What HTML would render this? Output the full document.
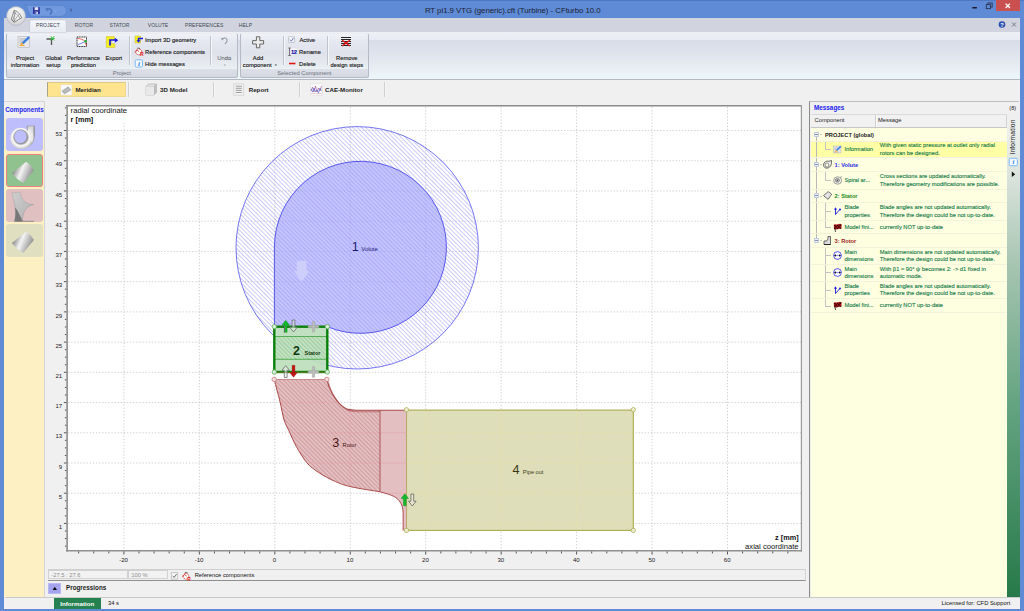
<!DOCTYPE html>
<html><head><meta charset="utf-8"><title>CFturbo</title>
<style>
*{box-sizing:border-box;margin:0;padding:0}
html,body{width:1024px;height:611px;overflow:hidden;background:#5f8bd6;font-family:"Liberation Sans","DejaVu Sans",sans-serif;font-size:6.6px;color:#222}
.a{position:absolute}
.t{position:absolute;white-space:nowrap;line-height:1}
.c{text-align:center;transform:translateX(-50%)}
#win{position:absolute;left:0;top:0;width:1024px;height:611px;background:#5f8bd6;overflow:hidden}
#client{position:absolute;left:4.2px;top:18px;width:1015.4px;height:590.5px;background:#f0f0f0}
#tabrow{position:absolute;left:4.2px;top:18px;width:1015.4px;height:14px;background:#d1d4de}
#ribbon{position:absolute;left:4.2px;top:31.8px;width:1015.4px;height:47.8px;background:linear-gradient(#eef0f6 0,#e8ebf3 8px,#d8dce8 8.5px,#e2e6ee 55%,#edf7f8 100%);border-bottom:1px solid #b5b8c2}
.grp{position:absolute;top:32.5px;height:45px;border:1px solid #b6bac6;border-top-color:rgba(255,255,255,0.5);border-radius:2.5px;background:linear-gradient(#f0f2f7 0,#e4e7ef 20%,#dfe2ea 45%,#e9eef2 78%,#ecf3f4 81%,#dcdfe7 82.5%,#d5d8e1 100%)}
.gcap{position:absolute;left:0;right:0;bottom:0;height:8px;text-align:center;color:#6c707c;font-size:5.8px;line-height:8px}
.vsep{position:absolute;width:1px;background:#c0c3cd;box-shadow:1px 0 0 #f6f7fa}
.rt{position:absolute;white-space:nowrap;line-height:7px;font-size:5.8px;color:#111;text-align:center;-webkit-text-stroke:0.12px #111}
.rtc{transform:translateX(-50%)}
.tab{position:absolute;top:22.7px;font-size:5.05px;color:#444a55;white-space:nowrap;line-height:1;letter-spacing:0.05px}
.vt{top:86.6px;font-size:6.2px;font-weight:700;color:#222}
.cb{left:5.6px;width:37.8px;height:33.2px;border-radius:3px}
.mt{font-size:5.76px;line-height:7.4px;color:#23804e;-webkit-text-stroke:0.14px #23804e;letter-spacing:-0.01px}
</style></head><body>
<div id="win"><div class="a" style="left:0;top:0;width:1024px;height:1px;background:#4f78c0"></div>
<div id="client"></div>
<!-- TITLE -->
<div class="t" style="left:424.9px;top:7.4px;font-size:7.85px;letter-spacing:-0.04px;color:#1a2233">RT pi1.9 VTG (generic).cft (Turbine) - CFturbo 10.0</div>
<div id="tabrow"></div>
<div id="ribbon"></div>
<!--TABS-->
<!-- title bar controls -->
<div class="a" style="left:996.3px;top:0;width:23.7px;height:11.3px;background:#c9504e"></div>
<svg class="a" style="left:960px;top:0" width="64" height="14" viewBox="0 0 64 14">
<rect x="12.3" y="7" width="4.6" height="1.5" fill="#1b1b2b"/>
<rect x="28" y="3" width="4.2" height="4" fill="none" stroke="#2a3350" stroke-width="0.9"/>
<rect x="26.3" y="4.6" width="4.2" height="4" fill="#5f8bd6" stroke="#2a3350" stroke-width="0.9"/>
<path d="M45.6 3.6l4.4 4.4M50 3.6l-4.4 4.4" stroke="#fff" stroke-width="1.3"/>
</svg>
<!-- quick access pill -->
<svg class="a" style="left:4px;top:2px" width="80" height="26" viewBox="0 0 80 26">
<path d="M20.5 3.2h36.5a5.6 5.6 0 0 1 0 11.2H29.5c-3 0-4.5-2.5-5.5-6c-0.8-2.8-1.5-4.6-3.5-5.2z" fill="#7099df" stroke="#547fc8" stroke-width="0.7"/>
<defs><radialGradient id="orb" cx="0.5" cy="0.35" r="0.7"><stop offset="0" stop-color="#ffffff"/><stop offset="0.6" stop-color="#e6e6e6"/><stop offset="1" stop-color="#c4c4c6"/></radialGradient></defs>
<circle cx="12" cy="14" r="9.5" fill="url(#orb)" stroke="#aeb4c2" stroke-width="0.6"/>
<path d="M7.3 17.3L10 8.3C13.5 9 16.5 12 17.6 16L10 20.3Z" fill="none" stroke="#4a4a4a" stroke-width="0.6"/>
<path d="M9.3 10.5C12.3 11.2 14.8 13.5 16 16.8M8.3 19L12.3 9.4M9.3 19.8L15.3 11.8M10 20.3L10.5 9" stroke="#5a5a5a" stroke-width="0.45" fill="none"/>
<!-- save -->
<rect x="29" y="5.2" width="6.8" height="6.8" fill="#2b2f9a"/>
<rect x="30.6" y="5.2" width="3.6" height="2.9" fill="#dfe3f5"/>
<rect x="30.8" y="9.6" width="3.2" height="2.4" fill="#c8cce8"/>
<rect x="31.2" y="10" width="1" height="1.6" fill="#2b2f9a"/>
<!-- undo grey -->
<path d="M43.2 8.3c1-2 3.8-2 4.3 0.3c0.4 1.7-0.5 2.9-1.8 3.7" fill="none" stroke="#4c77bf" stroke-width="1.7"/>
<path d="M41.5 6l3.5 0.6l-2.1 3z" fill="#4c77bf"/>
<path d="M50.3 8.4h2.4l-1.2 1.5z" fill="#8fb0e6"/>
<path d="M66 7.2h2.2" stroke="#3a4a78" stroke-width="0.5"/><path d="M66 8.3h2.2l-1.1 1.4z" fill="#3a4a78"/>
</svg>
<!-- help & close -->
<svg class="a" style="left:996px;top:19px" width="24" height="11" viewBox="0 0 24 11">
<circle cx="6" cy="5.5" r="3.3" fill="#2b4fb0"/>
<text x="6" y="7.6" font-size="5.8" font-weight="700" fill="#fff" text-anchor="middle" font-family="Liberation Sans, sans-serif">?</text>
<path d="M16 3.5l4 4M20 3.5l-4 4" stroke="#6a6f7c" stroke-width="0.9"/>
</svg>
<!-- tabs -->
<div class="a" style="left:30px;top:20.2px;width:36px;height:12px;background:linear-gradient(#f3f5f9,#e8ebf2);border:1px solid #e9ecf2;border-bottom:none;border-radius:2px 2px 0 0;box-shadow:0 0 0 0.5px #c3c7d2"></div>
<div class="tab" style="left:36px">PROJECT</div>
<div class="tab" style="left:74.8px">ROTOR</div>
<div class="tab" style="left:109.5px">STATOR</div>
<div class="tab" style="left:147.8px">VOLUTE</div>
<div class="tab" style="left:185px">PREFERENCES</div>
<div class="tab" style="left:238.7px">HELP</div>
<!-- group 1 -->
<div class="grp" style="left:5.6px;width:232.4px"><div class="gcap">Project</div></div>
<div class="vsep" style="left:128.5px;top:36px;height:29px"></div>
<div class="vsep" style="left:210px;top:36px;height:29px"></div>
<!-- icons big -->
<svg class="a" style="left:16.5px;top:35px" width="14" height="14" viewBox="0 0 14 14">
<rect x="1" y="1.5" width="11.5" height="11" fill="#e9e9ec" stroke="#b9bbc2" stroke-width="0.7"/>
<path d="M2.5 4h6M2.5 6h4.5M2.5 8h3" stroke="#9a9ca6" stroke-width="0.7"/>
<path d="M11.3 1.2l1.7 1.7l-6.5 6.3l-1.7-1.7z" fill="#3b7fe0"/>
<path d="M4.8 7.5l1.7 1.7l-3.6 1.3z" fill="#f0a020"/>
<path d="M2.5 10.5h5" stroke="#f0a020" stroke-width="0.9"/>
</svg>
<svg class="a" style="left:44.5px;top:35px" width="14" height="14" viewBox="0 0 14 14">
<path d="M1.5 4h6.5M6.5 4v6" stroke="#555" stroke-width="1.3" fill="none"/>
<path d="M5.8 1.2l3.4 4.3M9.2 1.2l-3.4 4.3M5.2 3.4h4.6" stroke="#2bbd3b" stroke-width="0.9"/>
</svg>
<svg class="a" style="left:75px;top:34.5px" width="14" height="14" viewBox="0 0 14 14">
<rect x="2" y="2" width="9.5" height="9.5" fill="#fff" stroke="#222" stroke-width="0.9" stroke-dasharray="1.2 0.5"/>
<path d="M2.5 3.5c3 0 5 1 8.5 3" stroke="#e03a3a" stroke-width="0.8" fill="none"/>
<path d="M2.5 9.5c3-0.5 5-1.5 8.5-3.5" stroke="#4a5ae0" stroke-width="0.8" fill="none"/>
<circle cx="10.5" cy="6.2" r="1.3" fill="#22b53a"/>
<path d="M10.6 7.5l0.8 3" stroke="#c02020" stroke-width="0.9"/>
</svg>
<svg class="a" style="left:105px;top:34.5px" width="15" height="14" viewBox="0 0 15 14">
<path d="M1.3 1.5h8v3.5h-3v3.8h3.5v3.7h-8.5z" fill="#f5ee20" stroke="#c8c030" stroke-width="0.5"/>
<path d="M5 10.5v-5.5h5" stroke="#1a1ae0" stroke-width="1.7" fill="none"/>
<path d="M9.8 2.7l3.5 2.5l-3.5 2.5z" fill="#1a1ae0"/>
</svg>
<div class="rt rtc" style="left:25px;top:54.7px">Project<br>information</div>
<div class="rt rtc" style="left:53.3px;top:54.7px">Global<br>setup</div>
<div class="rt rtc" style="left:83.5px;top:54.7px">Performance<br>prediction</div>
<div class="rt rtc" style="left:113.8px;top:54.7px">Export</div>
<!-- small buttons -->
<svg class="a" style="left:133.5px;top:34.5px" width="11" height="34" viewBox="0 0 11 34">
<path d="M1 1h5.5v7h-5.5z" fill="#f5ee20" stroke="#bdb530" stroke-width="0.5"/>
<path d="M9 3.5h-4.5v2.5" stroke="#1a1ae0" stroke-width="1.5" fill="none"/>
<path d="M2.4 5.3h4.2l-2.1 2.4z" fill="#1a1ae0"/>
<circle cx="4.7" cy="16.8" r="3" fill="#fff" stroke="#d02525" stroke-width="0.8" stroke-dasharray="2 0.8"/>
<path d="M1 17.5l2-2.5l2 1.5" fill="none" stroke="#d02525" stroke-width="0.8"/>
<path d="M3.5 13l2.5 0.5" stroke="#333" stroke-width="0.7"/>
<text x="6" y="21.3" font-size="5" font-weight="700" fill="#e02020" font-family="Liberation Sans, sans-serif">R</text>
<rect x="1.2" y="24.8" width="7.3" height="7.3" rx="1.3" fill="#f4f8ff" stroke="#7db8f5" stroke-width="1"/>
<text x="5" y="31" font-size="7" font-weight="700" font-style="italic" fill="#2a7be8" text-anchor="middle" font-family="Liberation Serif, serif">i</text>
</svg>
<div class="rt" style="left:145px;top:37px">Import 3D geometry</div>
<div class="rt" style="left:145px;top:48.8px">Reference components</div>
<div class="rt" style="left:145px;top:60.7px">Hide messages</div>
<!-- undo -->
<svg class="a" style="left:218px;top:36px" width="12" height="10" viewBox="0 0 12 10">
<path d="M4.5 3.5c1.2-2.2 4.3-2 4.6 0.5c0.2 1.8-0.8 3-2.2 4" fill="none" stroke="#9a9eab" stroke-width="1.2"/>
<path d="M2.8 1.8l3 0.5l-1.8 2.5z" fill="#9a9eab"/>
</svg>
<div class="rt rtc" style="left:224.3px;top:54.7px;color:#9b9fab">Undo</div>
<svg class="a" style="left:222.8px;top:63.5px" width="4" height="3" viewBox="0 0 4 3"><path d="M0.5 0.5h2.6l-1.3 1.6z" fill="#a0a4b0"/></svg>
<!-- group 2 -->
<div class="grp" style="left:240px;width:128.5px"><div class="gcap">Selected Component</div></div>
<div class="vsep" style="left:282.5px;top:36px;height:29px"></div>
<div class="vsep" style="left:326.8px;top:36px;height:29px"></div>
<svg class="a" style="left:251px;top:34.5px" width="14" height="14" viewBox="0 0 14 14">
<path d="M5.4 1.8h3.4v3.8h3.8v3.4h-3.8v3.8h-3.4v-3.8h-3.8v-3.4h3.8z" fill="#ececec" stroke="#5a5a5a" stroke-width="0.9"/>
</svg>
<div class="rt rtc" style="left:258px;top:54.7px">Add<br>component&nbsp;</div>
<svg class="a" style="left:273.8px;top:63.5px" width="4" height="3" viewBox="0 0 4 3"><path d="M0.5 0.5h2.6l-1.3 1.6z" fill="#555"/></svg>
<svg class="a" style="left:287px;top:35px" width="12" height="33" viewBox="0 0 12 33">
<rect x="1.7" y="1.8" width="5.8" height="5.8" fill="#f4f5f8" stroke="#b4b7c1" stroke-width="0.7"/>
<path d="M3 4.7l1.3 1.5l2.2-3.2" stroke="#4a62b8" stroke-width="0.8" fill="none"/>
<path d="M1.3 13h2.4M2.5 13v7.5M1.3 20.5h2.4" stroke="#444" stroke-width="0.7" fill="none"/>
<rect x="3.9" y="13.6" width="6.3" height="5.6" fill="#fbfbfd"/><text x="4" y="18.6" font-size="5.8" font-weight="700" fill="#0c0ca8" stroke="#0c0ca8" stroke-width="0.15" font-family="Liberation Sans, sans-serif" letter-spacing="-0.4">12</text>
<rect x="2" y="27.7" width="6.5" height="1.6" fill="#e01515"/>
</svg>
<div class="rt" style="left:299.5px;top:37px">Active</div>
<div class="rt" style="left:299px;top:48.8px">Rename</div>
<div class="rt" style="left:299px;top:60.7px">Delete</div>
<svg class="a" style="left:340px;top:36px" width="13" height="11" viewBox="0 0 13 11">
<path d="M1 1h10M1 3h10M1 5h10M1 7.3h10M1 9.5h10" stroke="#111" stroke-width="0.9" shape-rendering="crispEdges"/>
<path d="M2.2 4.3l7.6 5.8M9.8 4.3l-7.6 5.8" stroke="#e81010" stroke-width="1.3"/>
</svg>
<div class="rt rtc" style="left:346.8px;top:54.7px">Remove<br>design steps</div>
<!--/RIBBON-->
<!--VIEWTABS-->
<!-- view tabs -->
<div class="a" style="left:46.5px;top:82.2px;width:79.2px;height:14.5px;background:#ffe48f;border:1px solid #ecd88e;border-left:1px solid #a9a38c;border-top:1px solid #d9c888"></div>
<div class="vsep" style="left:127.8px;top:82px;height:15px;background:#d0d0d0"></div>
<div class="vsep" style="left:213.2px;top:82px;height:15px;background:#d0d0d0"></div>
<div class="vsep" style="left:298.7px;top:82px;height:15px;background:#d0d0d0"></div>
<div class="vsep" style="left:383.7px;top:82px;height:15px;background:#d0d0d0"></div>
<svg class="a" style="left:59.5px;top:83.5px" width="13" height="12" viewBox="0 0 13 12">
<rect x="0.8" y="0.8" width="11" height="10.4" fill="#fbfbfb" stroke="#cfcfcf" stroke-width="0.5" stroke-dasharray="0.8 0.6"/>
<path d="M2 7l6.3-4.2l2.5 3.2l-6.3 4z" fill="#b9b9b9" stroke="#8d8d8d" stroke-width="0.5"/>
</svg>
<svg class="a" style="left:144.5px;top:83px" width="13" height="13" viewBox="0 0 13 13">
<path d="M1 3.5l2.5-2.5h8v8.5l-2.5 2.5h-8z" fill="#e2e2e2" stroke="#a9a9a9" stroke-width="0.6"/>
<path d="M1 3.5h8v8.5M9 3.5l2.5-2.5" fill="none" stroke="#a9a9a9" stroke-width="0.6"/>
<path d="M1 3.5h8v8.5h-8z" fill="#e9e9e9"/>
<path d="M9 3.5l2.5-2.5v8.5l-2.5 2.5z" fill="#bdbdbd"/>
</svg>
<svg class="a" style="left:232.5px;top:83px" width="12" height="13" viewBox="0 0 12 13">
<rect x="0.8" y="0.8" width="10" height="11.4" fill="#f1f1f1" stroke="#c9c9c9" stroke-width="0.6"/>
<path d="M2.8 3.2h6M2.8 5.3h6M2.8 7.4h6M2.8 9.5h6" stroke="#7a7a7a" stroke-width="0.7"/>
</svg>
<svg class="a" style="left:309.5px;top:83px" width="13" height="13" viewBox="0 0 13 13">
<rect x="0.5" y="0.8" width="12" height="11.4" fill="#fafafa" stroke="#dcdcdc" stroke-width="0.5"/>
<path d="M1 8l1.5-4l1.5 5l1.5-6l1.5 6l1.5-4l1.5 3l1.5-5" fill="none" stroke="#9a4a8a" stroke-width="0.6"/>
<path d="M1 6l1.5 3l1.5-4l1.5 4l1.5-2l1.5 3l1.5-5l1.5 3" fill="none" stroke="#4a5ad0" stroke-width="0.6"/>
<path d="M1 10.5h11" stroke="#e0a0a0" stroke-width="0.5"/>
</svg>
<div class="t vt" style="left:75.4px">Meridian</div>
<div class="t vt" style="left:160px">3D Model</div>
<div class="t vt" style="left:248.7px">Report</div>
<div class="t vt" style="left:325px">CAE-Monitor</div>
<!-- sidebar -->
<div class="a" style="left:4.2px;top:101px;width:40.9px;height:496px;background:#fdf1c4;border-top:1px solid #d6d6d6;border-right:1px solid #d4d4d4"></div>
<div class="a" style="left:4.2px;top:102px;width:39.9px;height:15.5px;background:#f0f0f0"></div>
<div class="t" style="left:5.2px;top:107.3px;font-size:6.3px;font-weight:700;color:#2222ee">Components</div>
<div class="a cb" style="top:118.3px;background:#bebefc"></div>
<div class="a cb" style="top:153.8px;background:#90c290;border:1px solid #f08080;height:33.7px"></div>
<div class="a cb" style="top:189.2px;background:#e0c0c0;height:32.5px"></div>
<div class="a cb" style="top:223.8px;background:#e0e0c0;height:32.8px"></div>
<svg class="a" style="left:6px;top:118.5px" width="37" height="138" viewBox="0 0 37 138">
<defs>
<linearGradient id="gm" x1="0" y1="0" x2="1" y2="0"><stop offset="0" stop-color="#8a8a8a"/><stop offset="0.450" stop-color="#f2f2f2"/><stop offset="1" stop-color="#7d7d7d"/></linearGradient>
<linearGradient id="gm2" x1="0" y1="0" x2="1" y2="1"><stop offset="0" stop-color="#cfcfcf"/><stop offset="0.6" stop-color="#bcbcbc"/><stop offset="1" stop-color="#8a8a8a"/></linearGradient>
<linearGradient id="gm3" x1="0" y1="0.3" x2="1" y2="0.7"><stop offset="0" stop-color="#6c6c6c"/><stop offset="0.42" stop-color="#f4f4f4"/><stop offset="1" stop-color="#7a7a7a"/></linearGradient>
</defs>
<!-- volute icon -->
<radialGradient id="gv" gradientUnits="userSpaceOnUse" cx="15" cy="18.3" r="13.5"><stop offset="0.46" stop-color="#8c8c8c"/><stop offset="0.62" stop-color="#fbfbfb"/><stop offset="0.8" stop-color="#d9d9d9"/><stop offset="1" stop-color="#8e8e8e"/></radialGradient>
<path d="M21.3 6.7L28.5 6.7L28.5 17.5C28.5 24.5 23 29.9 15 29.9C8.5 29.9 4.2 25 4.2 19C4.2 13 9 8.7 14.5 8.7C17 8.7 19.5 9.5 21.3 11Z" fill="url(#gv)"/>
<path d="M22.3 7.2h5.2v11c0 2-0.5 4-1.5 5.5c-2-3-3.5-7-3.7-10z" fill="#f1f1f1" fill-opacity="0.75"/>
<path d="M21.3 6.7v5M28.5 6.7v11" stroke="#8f8f8f" stroke-width="0.6" fill="none"/>
<ellipse cx="14.5" cy="17.7" rx="6.5" ry="6.850" fill="#bebefc" stroke="#8a8a8a" stroke-width="0.5"/>
<!-- stator icon -->
<path d="M20.3 42.7q5 3 7.6 8.5l-10.5 12.7q-6.5-3-11.5-9.800z" fill="url(#gm3)"/>
<!-- rotor icon -->
<path d="M5.7 73.9l8.3-0.8c1 6 4 10.5 9.5 12l4.5 0.4c-4.5 1-7.5 3-9.5 7c-1.5 3-2 6-2 9.8h-8c1-5 1-9 0.5-13c-0.5-5-1.8-10.4-3.3-15.4z" fill="url(#gm2)" stroke="#8c8c8c" stroke-width="0.3"/>
<path d="M8.5 102.3c1.2-5 1.2-9 0.5-14c3.5 4 5 8.5 7.5 14z" fill="#777"/>
<path d="M8.5 102.3h19.5" stroke="#777" stroke-width="0.7"/>
<!-- pipe icon -->
<path d="M20.3 112.5q5 3 7.6 8.5l-10.5 12.7q-6.5-3-11.5-9.800z" fill="url(#gm3)"/>
</svg>
<!--/SIDEBAR-->
<!--CHART-->
<svg class="a" style="left:0;top:0" width="1024" height="611" viewBox="0 0 1024 611" font-family="Liberation Sans, sans-serif">
<defs>
<pattern id="hb" width="3" height="3" patternUnits="userSpaceOnUse" patternTransform="rotate(-45)"><rect x="0" y="0" width="0.62" height="3" fill="#8e8ef5"/></pattern>
<pattern id="hg" width="3" height="3" patternUnits="userSpaceOnUse" patternTransform="rotate(-45)"><rect x="0" y="0" width="0.6" height="3" fill="#78b878"/></pattern>
<pattern id="hr" width="3" height="3" patternUnits="userSpaceOnUse" patternTransform="rotate(-45)"><rect x="0" y="0" width="0.62" height="3" fill="#b06060"/></pattern>
<clipPath id="plotclip"><rect x="67.5" y="106.5" width="734" height="444"/></clipPath>
</defs>
<rect x="67.0" y="106.0" width="735.0" height="445.0" fill="#fff"/>
<path d="M68.0 523.44H801.5M68.0 493.22H801.5M68.0 463.00H801.5M68.0 432.77H801.5M68.0 402.55H801.5M68.0 372.32H801.5M68.0 342.10H801.5M68.0 311.88H801.5M68.0 281.65H801.5M68.0 251.43H801.5M68.0 221.20H801.5M68.0 190.98H801.5M68.0 160.76H801.5M68.0 130.53H801.5M123.90 107.0V550.5M199.35 107.0V550.5M274.80 107.0V550.5M350.25 107.0V550.5M425.70 107.0V550.5M501.15 107.0V550.5M576.60 107.0V550.5M652.05 107.0V550.5M727.50 107.0V550.5" stroke="#cdcdcd" stroke-width="0.9" stroke-dasharray="1.4 1.7" fill="none"/>
<path d="M67.1 105.1V551.6" stroke="#858585" stroke-width="1.5" fill="none"/>
<path d="M66.1 105.75H802" stroke="#8c8c8c" stroke-width="1.3" fill="none"/>
<path d="M801.4 105.1V551.6" stroke="#9a9a9a" stroke-width="1.2" fill="none"/>
<path d="M66.1 550.8H802" stroke="#909090" stroke-width="1.5" fill="none"/>
<path d="M64.9 546.11h1.4M64.9 538.56h1.4M64.9 531.00h1.4M63.9 523.44h2.4M64.9 515.89h1.4M64.9 508.33h1.4M64.9 500.78h1.4M63.9 493.22h2.4M64.9 485.66h1.4M64.9 478.11h1.4M64.9 470.55h1.4M63.9 463.00h2.4M64.9 455.44h1.4M64.9 447.88h1.4M64.9 440.33h1.4M63.9 432.77h2.4M64.9 425.22h1.4M64.9 417.66h1.4M64.9 410.10h1.4M63.9 402.55h2.4M64.9 394.99h1.4M64.9 387.44h1.4M64.9 379.88h1.4M63.9 372.32h2.4M64.9 364.77h1.4M64.9 357.21h1.4M64.9 349.66h1.4M63.9 342.10h2.4M64.9 334.54h1.4M64.9 326.99h1.4M64.9 319.43h1.4M63.9 311.88h2.4M64.9 304.32h1.4M64.9 296.76h1.4M64.9 289.21h1.4M63.9 281.65h2.4M64.9 274.10h1.4M64.9 266.54h1.4M64.9 258.98h1.4M63.9 251.43h2.4M64.9 243.87h1.4M64.9 236.32h1.4M64.9 228.76h1.4M63.9 221.20h2.4M64.9 213.65h1.4M64.9 206.09h1.4M64.9 198.54h1.4M63.9 190.98h2.4M64.9 183.42h1.4M64.9 175.87h1.4M64.9 168.31h1.4M63.9 160.76h2.4M64.9 153.20h1.4M64.9 145.64h1.4M64.9 138.09h1.4M63.9 130.53h2.4M64.9 122.98h1.4M64.9 115.42h1.4M64.9 107.86h1.4M78.63 551.5v1.9M93.72 551.5v1.9M108.81 551.5v1.9M123.90 551.5v3.0M138.99 551.5v1.9M154.08 551.5v1.9M169.17 551.5v1.9M184.26 551.5v1.9M199.35 551.5v3.0M214.44 551.5v1.9M229.53 551.5v1.9M244.62 551.5v1.9M259.71 551.5v1.9M274.80 551.5v3.0M289.89 551.5v1.9M304.98 551.5v1.9M320.07 551.5v1.9M335.16 551.5v1.9M350.25 551.5v3.0M365.34 551.5v1.9M380.43 551.5v1.9M395.52 551.5v1.9M410.61 551.5v1.9M425.70 551.5v3.0M440.79 551.5v1.9M455.88 551.5v1.9M470.97 551.5v1.9M486.06 551.5v1.9M501.15 551.5v3.0M516.24 551.5v1.9M531.33 551.5v1.9M546.42 551.5v1.9M561.51 551.5v1.9M576.60 551.5v3.0M591.69 551.5v1.9M606.78 551.5v1.9M621.87 551.5v1.9M636.96 551.5v1.9M652.05 551.5v3.0M667.14 551.5v1.9M682.23 551.5v1.9M697.32 551.5v1.9M712.41 551.5v1.9M727.50 551.5v3.0M742.59 551.5v1.9M757.68 551.5v1.9M772.77 551.5v1.9M787.86 551.5v1.9" stroke="#222" stroke-width="0.75" fill="none"/>
<g font-size="6.1" fill="#222">
<text x="62.2" y="529.0" text-anchor="end">1</text>
<text x="62.2" y="498.8" text-anchor="end">5</text>
<text x="62.2" y="468.6" text-anchor="end">9</text>
<text x="62.2" y="438.4" text-anchor="end">13</text>
<text x="62.2" y="408.1" text-anchor="end">17</text>
<text x="62.2" y="377.9" text-anchor="end">21</text>
<text x="62.2" y="347.7" text-anchor="end">25</text>
<text x="62.2" y="317.5" text-anchor="end">29</text>
<text x="62.2" y="287.3" text-anchor="end">33</text>
<text x="62.2" y="257.0" text-anchor="end">37</text>
<text x="62.2" y="226.8" text-anchor="end">41</text>
<text x="62.2" y="196.6" text-anchor="end">45</text>
<text x="62.2" y="166.4" text-anchor="end">49</text>
<text x="62.2" y="136.1" text-anchor="end">53</text>
<text x="123.6" y="562" text-anchor="middle">-20</text>
<text x="199.1" y="562" text-anchor="middle">-10</text>
<text x="274.5" y="562" text-anchor="middle">0</text>
<text x="349.9" y="562" text-anchor="middle">10</text>
<text x="425.4" y="562" text-anchor="middle">20</text>
<text x="500.8" y="562" text-anchor="middle">30</text>
<text x="576.3" y="562" text-anchor="middle">40</text>
<text x="651.8" y="562" text-anchor="middle">50</text>
<text x="727.2" y="562" text-anchor="middle">60</text>
</g>
<rect x="69" y="107" width="59" height="16" fill="#fff"/><rect x="742" y="533" width="58" height="17" fill="#fff"/>
<text x="70.6" y="112.7" font-size="7.65" fill="#111">radial coordinate</text>
<text x="70.6" y="121.7" font-size="7.3" font-weight="700" fill="#111">r [mm]</text>
<text x="798.6" y="539.5" font-size="7.3" font-weight="700" fill="#111" text-anchor="end">z [mm]</text>
<text x="798.6" y="548.9" font-size="7.65" fill="#111" text-anchor="end">axial coordinate</text>
<g clip-path="url(#plotclip)">
<path d="M274.4 247.0V326.7H327.3A86.0 86.0 0 1 0 274.4 247.0Z" fill="#a0a0ff" fill-opacity="0.62"/>
<circle cx="357.2" cy="247.8" r="121.2" fill="url(#hb)" fill-opacity="0.75"/>
<circle cx="357.2" cy="247.8" r="121.2" fill="none" stroke="#5555ee" stroke-width="0.8"/>
<path d="M274.4 247.0V326.7H327.3A86.0 86.0 0 1 0 274.4 247.0Z" fill="none" stroke="#4a4ae8" stroke-width="0.9"/>
<path d="M296.8 260.8h9.6v10.2h3l-7.8 10.7l-7.8-10.7h3z" fill="#d0d0fb" fill-opacity="0.9"/>
<text x="351.8" y="250.8" font-size="12.6" fill="#1a1a70">1</text>
<text x="361.3" y="250.6" font-size="5.9" fill="#1a1a70">Volute</text>
<rect x="406.5" y="410.1" width="226.79999999999995" height="120.29999999999995" fill="#d9d8ae" fill-opacity="0.85" stroke="#aaaa4c" stroke-width="1.1"/>
<path d="M407.5 523.44H632.3M407.5 493.22H632.3M407.5 463.00H632.3M407.5 432.77H632.3M425.70 411.1V529.4M501.15 411.1V529.4M576.60 411.1V529.4" stroke="#e9e8a6" stroke-width="0.9" stroke-dasharray="1.4 1.7" fill="none"/>
<text x="512.6" y="474.3" font-size="12.6" fill="#3a3a10">4</text>
<text x="522.8" y="474.1" font-size="5.6" fill="#3a3a10">Pipe out</text>
<path d="M274.3 379.5C274.8 381.4 276.2 387.2 277.2 391.0C278.2 394.8 279.0 397.6 280.2 402.4C281.4 407.2 282.5 415.0 284.1 420.0C285.7 425.0 287.7 428.0 289.7 432.4C291.7 436.8 293.4 441.2 296.2 446.2C299.0 451.2 303.0 458.2 306.7 462.6C310.4 467.0 313.7 469.2 318.5 472.4C323.3 475.6 330.1 479.2 335.5 481.6C340.9 484.0 343.8 485.1 351.2 486.8C358.6 488.5 375.2 491.0 380.0 491.8V410.3H357C355.7 410.2 351.4 410.1 349.3 409.6C347.2 409.2 346.0 408.6 344.4 407.6C342.8 406.6 341.1 405.4 339.5 403.7C337.9 402.0 336.2 399.9 334.6 397.4C333.0 394.9 331.1 391.6 329.8 388.6C328.5 385.6 327.3 381.0 326.8 379.5Z" fill="#d9a9ad" fill-opacity="0.75"/>
<path d="M274.3 379.5C274.8 381.4 276.2 387.2 277.2 391.0C278.2 394.8 279.0 397.6 280.2 402.4C281.4 407.2 282.5 415.0 284.1 420.0C285.7 425.0 287.7 428.0 289.7 432.4C291.7 436.8 293.4 441.2 296.2 446.2C299.0 451.2 303.0 458.2 306.7 462.6C310.4 467.0 313.7 469.2 318.5 472.4C323.3 475.6 330.1 479.2 335.5 481.6C340.9 484.0 343.8 485.1 351.2 486.8C358.6 488.5 375.2 491.0 380.0 491.8V410.3H357C355.7 410.2 351.4 410.1 349.3 409.6C347.2 409.2 346.0 408.6 344.4 407.6C342.8 406.6 341.1 405.4 339.5 403.7C337.9 402.0 336.2 399.9 334.6 397.4C333.0 394.9 331.1 391.6 329.8 388.6C328.5 385.6 327.3 381.0 326.8 379.5Z" fill="url(#hr)" fill-opacity="0.6"/>
<path d="M380 410.3H406.5V530.4H403.1C403.1 528.0 403.2 519.5 403.1 516.0C403.1 512.5 403.1 511.6 402.8 509.5C402.5 507.4 402.1 505.5 401.1 503.6C400.1 501.7 398.6 499.7 396.7 498.2C394.8 496.7 392.6 495.8 389.8 494.7C387.0 493.6 381.6 492.3 380.0 491.8Z" fill="#d9a9ad" fill-opacity="0.75"/>
<clipPath id="rc"><path d="M274.3 379.5C274.8 381.4 276.2 387.2 277.2 391.0C278.2 394.8 279.0 397.6 280.2 402.4C281.4 407.2 282.5 415.0 284.1 420.0C285.7 425.0 287.7 428.0 289.7 432.4C291.7 436.8 293.4 441.2 296.2 446.2C299.0 451.2 303.0 458.2 306.7 462.6C310.4 467.0 313.7 469.2 318.5 472.4C323.3 475.6 330.1 479.2 335.5 481.6C340.9 484.0 343.8 485.1 351.2 486.8C358.6 488.5 375.2 491.0 380.0 491.8V410.3H357C355.7 410.2 351.4 410.1 349.3 409.6C347.2 409.2 346.0 408.6 344.4 407.6C342.8 406.6 341.1 405.4 339.5 403.7C337.9 402.0 336.2 399.9 334.6 397.4C333.0 394.9 331.1 391.6 329.8 388.6C328.5 385.6 327.3 381.0 326.8 379.5Z"/><path d="M380 410.3H406.5V530.4H403.1C403.1 528.0 403.2 519.5 403.1 516.0C403.1 512.5 403.1 511.6 402.8 509.5C402.5 507.4 402.1 505.5 401.1 503.6C400.1 501.7 398.6 499.7 396.7 498.2C394.8 496.7 392.6 495.8 389.8 494.7C387.0 493.6 381.6 492.3 380.0 491.8Z"/></clipPath>
<path d="M274 493.22H407M274 463.00H407M274 432.77H407M274 402.55H407M350.25 379V531" clip-path="url(#rc)" stroke="#eca4a8" stroke-width="0.9" stroke-dasharray="1.4 1.7" fill="none"/>
<path d="M274.3 379.5C274.8 381.4 276.2 387.2 277.2 391.0C278.2 394.8 279.0 397.6 280.2 402.4C281.4 407.2 282.5 415.0 284.1 420.0C285.7 425.0 287.7 428.0 289.7 432.4C291.7 436.8 293.4 441.2 296.2 446.2C299.0 451.2 303.0 458.2 306.7 462.6C310.4 467.0 313.7 469.2 318.5 472.4C323.3 475.6 330.1 479.2 335.5 481.6C340.9 484.0 343.8 485.1 351.2 486.8C358.6 488.5 375.2 491.0 380.0 491.8C381.6 492.3 387.0 493.6 389.8 494.7C392.6 495.8 394.8 496.7 396.7 498.2C398.6 499.7 400.1 501.7 401.1 503.6C402.1 505.5 402.5 507.4 402.8 509.5C403.1 511.6 403.1 512.5 403.1 516.0C403.2 519.5 403.1 528.0 403.1 530.4" fill="none" stroke="#a33a3a" stroke-width="0.9"/>
<path d="M326.8 379.5C327.3 381.0 328.5 385.6 329.8 388.6C331.1 391.6 333.0 394.9 334.6 397.4C336.2 399.9 337.9 402.0 339.5 403.7C341.1 405.4 342.8 406.6 344.4 407.6C346.0 408.6 347.2 409.2 349.3 409.6C351.4 410.1 355.7 410.2 357.0 410.3H406.5" fill="none" stroke="#a84a4a" stroke-width="1.1"/>
<path d="M328.3 381.5C328.7 382.8 329.6 386.6 330.8 389.4C332.0 392.2 333.8 395.7 335.4 398.2C337.0 400.7 338.6 402.9 340.2 404.6C341.8 406.4 343.4 407.6 345.0 408.7C346.6 409.8 347.6 410.4 349.6 410.9C351.6 411.4 355.8 411.6 357.0 411.8H380" fill="none" stroke="#a84a4a" stroke-width="0.6"/>
<path d="M380 410.3V491.8" stroke="#a84a4a" stroke-width="0.9" fill="none"/>
<path d="M274.3 379.5H326.8" stroke="#b86a6a" stroke-width="0.7" fill="none"/>
<text x="332.3" y="446.9" font-size="12.6" fill="#4a1414">3</text>
<text x="342.6" y="446.7" font-size="5.6" fill="#4a1414">Rotor</text>
<rect x="274.3" y="326.7" width="53" height="45.3" fill="#bcdfbc" fill-opacity="0.93"/>
<rect x="274.3" y="336.5" width="53" height="22.8" fill="url(#hg)" fill-opacity="0.7"/>
<path d="M274.3 336.5h53M274.3 359.3h53" stroke="#2a9a2a" stroke-width="0.7"/>
<rect x="274.3" y="326.7" width="53" height="45.3" fill="none" stroke="#0a800a" stroke-width="2.4"/>
<path d="M276 372.3H326" stroke="#c86a3a" stroke-width="0.5"/>
<text x="293" y="355.1" font-size="12.4" font-weight="700" fill="#103810">2</text>
<text x="304.5" y="354.9" font-size="5.5" font-weight="700" fill="#103810">Stator</text>
<circle cx="274.3" cy="326.7" r="2.2" fill="#d9efd9" stroke="#4aa84a" stroke-width="0.7"/>
<circle cx="327.3" cy="326.7" r="2.2" fill="#d9efd9" stroke="#4aa84a" stroke-width="0.7"/>
<circle cx="274.3" cy="372" r="2.2" fill="#d9efd9" stroke="#4aa84a" stroke-width="0.7"/>
<circle cx="327.3" cy="372" r="2.2" fill="#d9efd9" stroke="#4aa84a" stroke-width="0.7"/>
<circle cx="274.2" cy="379.4" r="2.2" fill="#f3dede" stroke="#c06a6a" stroke-width="0.7"/>
<circle cx="326.9" cy="379.4" r="2.2" fill="#f3dede" stroke="#c06a6a" stroke-width="0.7"/>
<circle cx="406.5" cy="409.7" r="2.2" fill="#ecebcf" stroke="#a9a94a" stroke-width="0.7"/>
<circle cx="633.3" cy="409.7" r="2.2" fill="#ecebcf" stroke="#a9a94a" stroke-width="0.7"/>
<circle cx="406.5" cy="530.4" r="2.2" fill="#ecebcf" stroke="#a9a94a" stroke-width="0.7"/>
<circle cx="633.3" cy="530.4" r="2.2" fill="#ecebcf" stroke="#a9a94a" stroke-width="0.7"/>
<path d="M285.7 320.3l3.8 4.8h-2.4v7.2h-2.8v-7.2h-2.4z" fill="#14b82c" stroke="#0a8a1a" stroke-width="0.4"/>
<path d="M284.5 326v6.5" stroke="#666" stroke-width="1"/>
<path d="M293.5 332l3.8-4.8h-2.4v-7.2h-2.8v7.2h-2.4z" fill="#dfe9df" stroke="#6e6e6e" stroke-width="0.8" fill-opacity="0.55"/>
<path d="M312.4 321.4h2.2v4.2h4.2v2.2h-4.2v4.2h-2.2v-4.2h-4.2v-2.2h4.2z" fill="#bdbdbd" stroke="#a2a2a2" stroke-width="0.5"/>
<path d="M285.7 365.6l3.8 4.8h-2.4v7.2h-2.8v-7.2h-2.4z" fill="#e6efe6" stroke="#6e6e6e" stroke-width="0.8" fill-opacity="0.55"/>
<path d="M293.5 377.3l3.8-4.8h-2.4v-7.2h-2.8v7.2h-2.4z" fill="#c01515" stroke="#901010" stroke-width="0.3"/>
<path d="M312.4 366.7h2.2v4.2h4.2v2.2h-4.2v4.2h-2.2v-4.2h-4.2v-2.2h4.2z" fill="#bdbdbd" stroke="#a2a2a2" stroke-width="0.5"/>
<path d="M404.8 493.8l3.8 4.8h-2.4v7.2h-2.8v-7.2h-2.4z" fill="#14b82c" stroke="#0a8a1a" stroke-width="0.4"/>
<path d="M412.3 506l3.8-4.8h-2.4v-7.2h-2.8v7.2h-2.4z" fill="#ecebd6" stroke="#666" stroke-width="0.8" fill-opacity="0.6"/>
</g>
</svg>
<!--MESSAGES-->
<div class="a" style="left:47.5px;top:568.7px;width:758.5px;height:12.4px;border-top:1px solid #cfcfcf;border-bottom:1px solid #8f8f8f;border-right:1px solid #d4d4d4"></div>
<div class="a" style="left:48px;top:570.2px;width:79.5px;height:9.3px;border:1px solid #d2d2d2;background:#f2f2f2"></div>
<div class="a" style="left:128px;top:570.2px;width:39.5px;height:9.3px;border:1px solid #d2d2d2;background:#f2f2f2"></div>
<div class="t" style="left:51.3px;top:573.1px;font-size:5.780px;color:#8d8d8d">-27.5 : 27.6</div>
<div class="t" style="left:131.3px;top:573.1px;font-size:5.780px;color:#8d8d8d">100 %</div>
<svg class="a" style="left:170px;top:570.6px" width="24" height="11" viewBox="0 0 24 11">
<rect x="1.3" y="1.7" width="6.4" height="6.4" fill="#f6f6f6" stroke="#b5b5b5" stroke-width="0.7"/>
<path d="M2.8 4.8l1.4 1.7l2.4-3.5" stroke="#555" stroke-width="0.8" fill="none"/>
<circle cx="16" cy="5.3" r="2.9" fill="#fff" stroke="#d02525" stroke-width="0.8" stroke-dasharray="2 0.8"/>
<path d="M12.5 6l2-2.5l2 1.5" fill="none" stroke="#d02525" stroke-width="0.8"/>
<path d="M15 1.3l2.5 0.5" stroke="#333" stroke-width="0.7"/>
<text x="17.3" y="9.6" font-size="4.8" font-weight="700" fill="#e02020" font-family="Liberation Sans, sans-serif">R</text>
</svg>
<div class="t" style="left:194.7px;top:573.1px;font-size:5.770px;color:#111">Reference components</div>
<div class="a" style="left:47.5px;top:582.5px;width:13px;height:11.5px;background:#a3a3ee;border:1px solid #b9b9f2"></div>
<svg class="a" style="left:51.5px;top:586px" width="6" height="5" viewBox="0 0 6 5"><path d="M0.6 4l2.2-3.2l2.2 3.2z" fill="#111"/></svg>
<div class="t" style="left:66px;top:585px;font-size:6.3px;font-weight:700;color:#1b1b1b">Progressions</div>
<div class="a" style="left:4.5px;top:596.5px;width:1015px;height:12px;background:#f0f0f0;border-top:1px solid #c9c9c9"></div>
<div class="a" style="left:53.5px;top:597.5px;width:47.5px;height:11px;background:#25814f"></div>
<div class="t c" style="left:77.3px;top:600.7px;font-size:6.2px;font-weight:700;color:#fff">Information</div>
<div class="t" style="left:108px;top:600.9px;font-size:5.8px;color:#111">34 s</div>
<div class="t" style="right:13.7px;top:600.9px;font-size:5.820px;color:#111">Licensed for: CFD Support</div>
<div class="a" style="left:808.8px;top:101px;width:210.7px;height:496px;border-left:1px solid #8a8a8a;border-top:1px solid #bdbdbd;background:#f0f0f0"></div>
<div class="a" style="left:810.5px;top:127.5px;width:196.5px;height:469px;background:#feffe1"></div>
<div class="a" style="left:1007px;top:102px;width:12.7px;height:495px;background:linear-gradient(#f0f0f0 0,#ecefec 6%,#d8e2da 16%,#a9c6b3 32%,#66a582 60%,#27794a 100%)"></div>
<div class="t" style="left:814px;top:105.1px;font-size:6.350px;font-weight:700;color:#2222ee">Messages</div>
<div class="t" style="left:1009.3px;top:106.2px;font-size:5.6px;color:#222">(8)</div>
<div class="a" style="left:810.5px;top:114px;width:196.5px;height:13.5px;background:#f1f1f1;border-top:1px solid #dadada;border-bottom:1px solid #c6c6c6;border-right:1px solid #d5d5d5"></div>
<div class="a" style="left:874.5px;top:115px;width:1px;height:12px;background:#cfcfcf;box-shadow:1px 0 0 #fafafa"></div>
<div class="t" style="left:814.5px;top:118.4px;font-size:5.8px;color:#222">Component</div>
<div class="t" style="left:878px;top:118.4px;font-size:5.8px;color:#222">Message</div>
<div class="a" style="left:810.5px;top:141.2px;width:196.5px;height:16.6px;background:#ffffa6"></div>
<div class="a" style="left:816.1px;top:137px;width:0.6px;height:102.5px;background:#b8b8b8"></div>
<div class="a" style="left:825.2px;top:141.2px;width:0.6px;height:8.3px;background:#c2c2c2"></div>
<div class="a" style="left:825.2px;top:171.6px;width:0.6px;height:8.7px;background:#c2c2c2"></div>
<div class="a" style="left:825.2px;top:202.6px;width:0.6px;height:24.4px;background:#c2c2c2"></div>
<div class="a" style="left:825.2px;top:247px;width:0.6px;height:58.8px;background:#c2c2c2"></div>
<div class="a" style="left:810.5px;top:140.7px;width:196.5px;height:0.7px;background:#f3f3dc"></div>
<div class="a" style="left:813.9px;top:132.0px;width:4.9px;height:4.8px;border:0.8px solid #bccae3;background:#f1f4fa;border-radius:0.8px"></div>
<div class="a" style="left:815px;top:134.00px;width:2.7px;height:0.8px;background:#8a8fa6"></div>
<div class="a" style="left:819.5px;top:134.10px;width:2.2px;height:0.6px;background:#c6c6c6"></div>
<div class="t" style="left:825px;top:132.5px;font-size:5.7px;font-weight:700;color:#222">PROJECT (global)</div>
<div class="a" style="left:810.5px;top:157.3px;width:196.5px;height:0.7px;background:#f3f3dc"></div>
<div class="a" style="left:825.2px;top:149.20px;width:5.8px;height:0.6px;background:#c2c2c2"></div>
<svg class="a" style="left:832.5px;top:145.0px" width="9" height="9" viewBox="0 0 9 9"><rect x="0.5" y="1" width="7.5" height="7" fill="#e4e4e8" stroke="#b5b5bd" stroke-width="0.5"/><path d="M1.5 3h3.5M1.5 4.5h2.5" stroke="#9a9ca6" stroke-width="0.5"/><path d="M7.2 0.8l1.1 1.1l-4.2 4.1l-1.1-1.1z" fill="#3b7fe0"/><path d="M3 4.9l1.1 1.1l-2.3 0.8z" fill="#f0a020"/><path d="M1.5 7h3.5" stroke="#f0a020" stroke-width="0.7"/></svg>
<div class="t mt" style="left:844.4px;top:146.1px">Information</div>
<div class="t mt" style="left:879.8px;top:142.4px">With given static pressure at outlet only radial<br>rotors can be designed.</div>
<div class="a" style="left:810.5px;top:171.1px;width:196.5px;height:0.7px;background:#f3f3dc"></div>
<div class="a" style="left:813.9px;top:162.3px;width:4.9px;height:4.8px;border:0.8px solid #bccae3;background:#f1f4fa;border-radius:0.8px"></div>
<div class="a" style="left:815px;top:164.30px;width:2.7px;height:0.8px;background:#8a8fa6"></div>
<div class="a" style="left:819.5px;top:164.40px;width:2.2px;height:0.6px;background:#c6c6c6"></div>
<svg class="a" style="left:822.5px;top:160.2px" width="9" height="9" viewBox="0 0 9 9"><path d="M6.2 1.2l2.3-0.7c0.3 2 0 4-1 5.5c-1 1.7-3 2.5-4.8 2c-1.7-0.5-2.5-2.2-2-4c0.5-1.8 2.2-3 4-2.8z" fill="#ebebeb" stroke="#444" stroke-width="0.8"/><ellipse cx="4" cy="5" rx="1.9" ry="2" fill="#feffe1" stroke="#555" stroke-width="0.6"/></svg>
<div class="t" style="left:834.5px;top:162.8px;font-size:5.7px;font-weight:700;color:#2a2ae6">1: Volute</div>
<div class="a" style="left:810.5px;top:188.6px;width:196.5px;height:0.7px;background:#f3f3dc"></div>
<div class="a" style="left:825.2px;top:180.05px;width:5.8px;height:0.6px;background:#c2c2c2"></div>
<svg class="a" style="left:832.5px;top:175.8px" width="9" height="9" viewBox="0 0 9 9"><ellipse cx="4.6" cy="4.5" rx="4" ry="3.7" fill="#f6f6ee" stroke="#666" stroke-width="0.6"/><ellipse cx="4.4" cy="4.4" rx="2.1" ry="1.9" fill="#c9c9c9" stroke="#555" stroke-width="0.6"/><circle cx="4.4" cy="4.4" r="0.8" fill="#555"/><path d="M7 1.5l1.8-0.8" stroke="#666" stroke-width="0.6"/></svg>
<div class="t mt" style="left:844.4px;top:176.9px">Spiral ar...</div>
<div class="t mt" style="left:879.8px;top:173.2px">Cross sections are updated automatically.<br>Therefore geometry modifications are possible.</div>
<div class="a" style="left:810.5px;top:202.1px;width:196.5px;height:0.7px;background:#f3f3dc"></div>
<div class="a" style="left:813.9px;top:193.4px;width:4.9px;height:4.8px;border:0.8px solid #bccae3;background:#f1f4fa;border-radius:0.8px"></div>
<div class="a" style="left:815px;top:195.45px;width:2.7px;height:0.8px;background:#8a8fa6"></div>
<div class="a" style="left:819.5px;top:195.55px;width:2.2px;height:0.6px;background:#c6c6c6"></div>
<svg class="a" style="left:822.5px;top:191.3px" width="9" height="9" viewBox="0 0 9 9"><path d="M5.2 0.6l3.5 2.6l-3.6 5.2l-4.6-3.8z" fill="#e3e3e3" stroke="#444" stroke-width="0.7"/></svg>
<div class="t" style="left:834.5px;top:193.9px;font-size:5.7px;font-weight:700;color:#1a8a1a">2: Stator</div>
<div class="a" style="left:810.5px;top:219.7px;width:196.5px;height:0.7px;background:#f3f3dc"></div>
<div class="a" style="left:825.2px;top:211.10px;width:5.8px;height:0.6px;background:#c2c2c2"></div>
<svg class="a" style="left:832.5px;top:206.9px" width="9" height="9" viewBox="0 0 9 9"><path d="M2.5 1.2v6.3l4.3-5" fill="none" stroke="#1a1ae0" stroke-width="0.9"/><path d="M1 2.8l1.5-2.5l1.5 2.5z" fill="#1a1ae0"/><circle cx="7" cy="2.4" r="1" fill="#1a1ae0"/></svg>
<div class="t mt" style="left:844.4px;top:204.3px">Blade<br>properties</div>
<div class="t mt" style="left:879.8px;top:204.3px">Blade angles are not updated automatically.<br>Therefore the design could be not up-to-date.</div>
<div class="a" style="left:810.5px;top:233.4px;width:196.5px;height:0.7px;background:#f3f3dc"></div>
<div class="a" style="left:825.2px;top:226.75px;width:5.8px;height:0.6px;background:#c2c2c2"></div>
<svg class="a" style="left:832.5px;top:222.6px" width="9" height="9" viewBox="0 0 9 9"><path d="M0.8 1.8c1.5-1.5 2.8 0.3 4.3-0.5c1.2-0.7 2.5-0.7 3.6 0l-0.3 4.8c-1-0.6-2.2-0.6-3.3 0c-1.5 0.9-2.8-0.6-4.1 0.4z" fill="#b81818"/><path d="M1.2 2h1.4v1.3h-1.4zM3.9 1.8h1.4v1.3h-1.4zM6.6 1.6h1.4v1.3h-1.4zM2.5 3.3h1.4v1.3h-1.4zM5.2 3.1h1.4v1.3h-1.4zM1.2 4.6h1.4v1.3h-1.4zM3.9 4.4h1.4v1.3h-1.4zM6.6 4.4h1.4v1.3h-1.4z" fill="#2a0606"/><path d="M2 6l0.5 3" stroke="#222" stroke-width="0.8"/></svg>
<div class="t mt" style="left:844.4px;top:223.7px">Model fini...</div>
<div class="t mt" style="left:879.8px;top:223.7px">currently NOT up-to-date</div>
<div class="a" style="left:810.5px;top:246.5px;width:196.5px;height:0.7px;background:#f3f3dc"></div>
<div class="a" style="left:813.9px;top:238.0px;width:4.9px;height:4.8px;border:0.8px solid #bccae3;background:#f1f4fa;border-radius:0.8px"></div>
<div class="a" style="left:815px;top:240.05px;width:2.7px;height:0.8px;background:#8a8fa6"></div>
<div class="a" style="left:819.5px;top:240.15px;width:2.2px;height:0.6px;background:#c6c6c6"></div>
<svg class="a" style="left:822.5px;top:235.9px" width="9" height="9" viewBox="0 0 9 9"><path d="M5 0.5h2.5v8h-6.5v-3.5h2c1.5 0 2-1.5 2-4.5z" fill="#dcdcdc" stroke="#333" stroke-width="0.7"/><path d="M1 8.5h6.5" stroke="#222" stroke-width="1"/></svg>
<div class="t" style="left:834.5px;top:238.5px;font-size:5.7px;font-weight:700;color:#a02222">3: Rotor</div>
<div class="a" style="left:810.5px;top:263.6px;width:196.5px;height:0.7px;background:#f3f3dc"></div>
<div class="a" style="left:825.2px;top:255.25px;width:5.8px;height:0.6px;background:#c2c2c2"></div>
<svg class="a" style="left:832.5px;top:251.1px" width="9" height="9" viewBox="0 0 9 9"><circle cx="4.5" cy="4.5" r="3.9" fill="#fdfdff" stroke="#2a2ae0" stroke-width="0.8"/><path d="M1.3 4.5h6.4" stroke="#2a2ae0" stroke-width="0.5"/><path d="M1 4.5l2-1.2v2.4zM8 4.5l-2-1.2v2.4z" fill="#111"/></svg>
<div class="t mt" style="left:844.4px;top:248.5px">Main<br>dimensions</div>
<div class="t mt" style="left:879.8px;top:248.5px">Main dimensions are not updated automatically.<br>Therefore the design could be not up-to-date.</div>
<div class="a" style="left:810.5px;top:280.9px;width:196.5px;height:0.7px;background:#f3f3dc"></div>
<div class="a" style="left:825.2px;top:272.45px;width:5.8px;height:0.6px;background:#c2c2c2"></div>
<svg class="a" style="left:832.5px;top:268.2px" width="9" height="9" viewBox="0 0 9 9"><circle cx="4.5" cy="4.5" r="3.9" fill="#fdfdff" stroke="#2a2ae0" stroke-width="0.8"/><path d="M1.3 4.5h6.4" stroke="#2a2ae0" stroke-width="0.5"/><path d="M1 4.5l2-1.2v2.4zM8 4.5l-2-1.2v2.4z" fill="#111"/></svg>
<div class="t mt" style="left:844.4px;top:265.6px">Main<br>dimensions</div>
<div class="t mt" style="left:879.8px;top:265.6px">With β1 = 90° ψ becomes 2: -&gt; d1 fixed in<br>automatic mode.</div>
<div class="a" style="left:810.5px;top:298.4px;width:196.5px;height:0.7px;background:#f3f3dc"></div>
<div class="a" style="left:825.2px;top:289.85px;width:5.8px;height:0.6px;background:#c2c2c2"></div>
<svg class="a" style="left:832.5px;top:285.6px" width="9" height="9" viewBox="0 0 9 9"><path d="M2.5 1.2v6.3l4.3-5" fill="none" stroke="#1a1ae0" stroke-width="0.9"/><path d="M1 2.8l1.5-2.5l1.5 2.5z" fill="#1a1ae0"/><circle cx="7" cy="2.4" r="1" fill="#1a1ae0"/></svg>
<div class="t mt" style="left:844.4px;top:283.0px">Blade<br>properties</div>
<div class="t mt" style="left:879.8px;top:283.0px">Blade angles are not updated automatically.<br>Therefore the design could be not up-to-date.</div>
<div class="a" style="left:810.5px;top:312.2px;width:196.5px;height:0.7px;background:#f3f3dc"></div>
<div class="a" style="left:825.2px;top:305.50px;width:5.8px;height:0.6px;background:#c2c2c2"></div>
<svg class="a" style="left:832.5px;top:301.3px" width="9" height="9" viewBox="0 0 9 9"><path d="M0.8 1.8c1.5-1.5 2.8 0.3 4.3-0.5c1.2-0.7 2.5-0.7 3.6 0l-0.3 4.8c-1-0.6-2.2-0.6-3.3 0c-1.5 0.9-2.8-0.6-4.1 0.4z" fill="#b81818"/><path d="M1.2 2h1.4v1.3h-1.4zM3.9 1.8h1.4v1.3h-1.4zM6.6 1.6h1.4v1.3h-1.4zM2.5 3.3h1.4v1.3h-1.4zM5.2 3.1h1.4v1.3h-1.4zM1.2 4.6h1.4v1.3h-1.4zM3.9 4.4h1.4v1.3h-1.4zM6.6 4.4h1.4v1.3h-1.4z" fill="#2a0606"/><path d="M2 6l0.5 3" stroke="#222" stroke-width="0.8"/></svg>
<div class="t mt" style="left:844.4px;top:302.4px">Model fini...</div>
<div class="t mt" style="left:879.8px;top:302.4px">currently NOT up-to-date</div>
<div class="t" style="left:1013.3px;top:137px;font-size:6.7px;color:#222;transform:translate(-50%,-50%) rotate(-90deg);letter-spacing:0.150px">Information</div>
<svg class="a" style="left:1008px;top:157px" width="11" height="22" viewBox="0 0 11 22">
<rect x="1.2" y="1.3" width="8.2" height="7.4" rx="1.3" fill="#f4f8ff" stroke="#6fb0f5" stroke-width="0.9"/>
<text x="5.3" y="7.3" font-size="6.5" font-weight="700" font-style="italic" fill="#2a7be8" text-anchor="middle" font-family="Liberation Serif, serif">i</text>
<path d="M3.8 14.5l3.4 2.7l-3.4 2.7z" fill="#111"/>
</svg>
<!--STATUS-->
</div>
</body></html>
